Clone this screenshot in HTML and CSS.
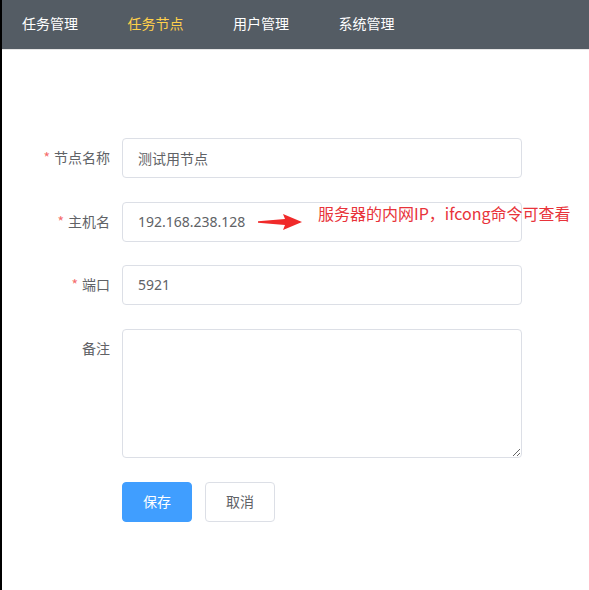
FILE: index.html
```html
<!DOCTYPE html>
<html lang="zh-CN">
<head>
<meta charset="utf-8">
<title>任务节点</title>
<link rel="stylesheet" href="styles.css">
</head>
<body>
<div class="page">
  <nav class="menu">
    <a class="menu-item">任务管理</a>
    <a class="menu-item active">任务节点</a>
    <a class="menu-item">用户管理</a>
    <a class="menu-item">系统管理</a>
  </nav>
  <form class="form">
    <div class="form-item">
      <label class="label required">节点名称</label>
      <div class="control"><input class="input" value="测试用节点"></div>
    </div>
    <div class="form-item">
      <label class="label required">主机名</label>
      <div class="control">
        <input class="input" value="192.168.238.128">
        <svg class="arrow" width="44" height="16" viewBox="0 0 44 16"><polygon points="0,7.3 27,5 25,0 44,8 25,16 27,11 0,8.7" fill="#f02a2a"/></svg>
        <span class="note">服务器的内网IP，ifcong命令可查看</span>
      </div>
    </div>
    <div class="form-item">
      <label class="label required">端口</label>
      <div class="control"><input class="input" value="5921"></div>
    </div>
    <div class="form-item">
      <label class="label">备注</label>
      <div class="control"><textarea class="textarea"></textarea></div>
    </div>
    <div class="form-item buttons">
      <div class="control">
        <button type="button" class="btn primary">保存</button>
        <button type="button" class="btn">取消</button>
      </div>
    </div>
  </form>
</div>
</body>
</html>
```
FILE: styles.css
```css
html, body {
  margin: 0;
  padding: 0;
  background: #fff;
}
body {
  font-family: "Noto Sans", "Noto Sans CJK SC", sans-serif;
  font-size: 14px;
  color: #606266;
}
.page {
  border-left: 2px solid #000;
  min-height: 590px;
  box-sizing: border-box;
}
.menu {
  display: flex;
  height: 50px;
  background: #545c64;
  border-bottom: 1px solid #e6e6e6;
  padding-left: 20px;
  gap: 49.5px;
  align-items: flex-start;
  box-sizing: border-box;
}
.menu-item {
  color: #fff;
  font-size: 14px;
  line-height: 46px;
  font-family: "Noto Sans CJK SC", sans-serif;
}
.menu-item.active {
  color: #ffd04b;
}
.form {
  margin-top: 88px;
  margin-left: 20px;
  display: flex;
  flex-direction: column;
  gap: 23.5px;
}
.form-item {
  display: flex;
  align-items: flex-start;
}
.form-item.buttons {
  margin-top: 0.5px;
  padding-left: 100px;
}
.label {
  width: 100px;
  box-sizing: border-box;
  padding-right: 12px;
  text-align: right;
  line-height: 38px;
  padding-bottom: 2px;
  font-family: "Noto Sans CJK SC", sans-serif;
  font-size: 14px;
  color: #606266;
}
.label.required::before {
  content: "*";
  color: #f56c6c;
  margin-right: 4px;
}
.control {
  position: relative;
  width: 400px;
  display: flex;
  gap: 13px;
}
.input, .textarea {
  width: 400px;
  box-sizing: border-box;
  border: 1px solid #dcdfe6;
  border-radius: 4px;
  background: #fff;
  color: #606266;
  font-family: "Noto Sans", "Noto Sans CJK SC", sans-serif;
  font-size: 14px;
  outline: none;
}
.input {
  height: 40px;
  padding: 0 15px 1px;
}
.textarea {
  height: 129px;
  padding: 5px 15px;
  resize: vertical;
  display: block;
}
.arrow {
  position: absolute;
  left: 136px;
  top: 12px;
}
.note {
  position: absolute;
  left: 196px;
  top: 0;
  white-space: nowrap;
  color: #e8333a;
  font-size: 16px;
  line-height: 22px;
  font-family: "Noto Sans CJK SC", sans-serif;
}
.btn {
  width: 70px;
  height: 40px;
  box-sizing: border-box;
  border: 1px solid #dcdfe6;
  border-radius: 4px;
  background: #fff;
  color: #606266;
  font-family: "Noto Sans CJK SC", sans-serif;
  font-size: 14px;
  padding: 0 0 1px;
}
.btn.primary {
  background: #409eff;
  border-color: #409eff;
  color: #fff;
}
```
